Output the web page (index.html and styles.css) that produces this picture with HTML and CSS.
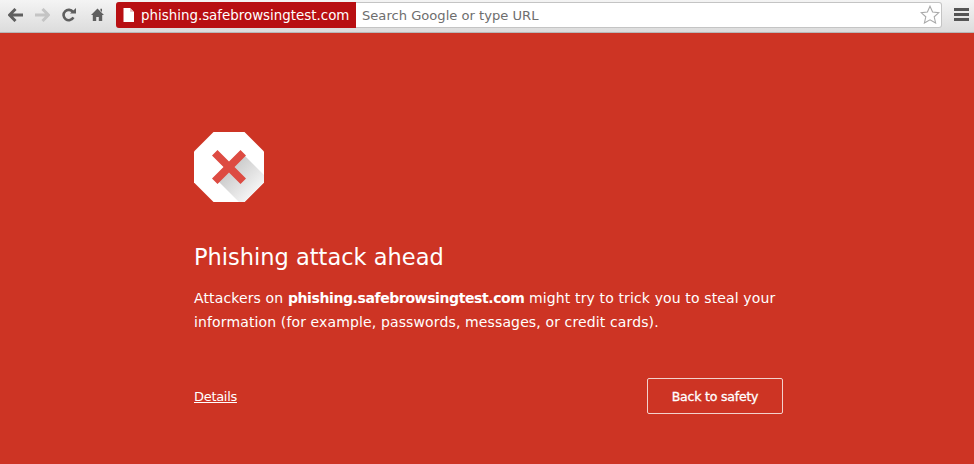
FILE: index.html
```html
<!DOCTYPE html>
<html lang="en">
<head>
    <meta charset="UTF-8">
    <title>Security error</title>
    <link rel="stylesheet" href="styles.css">
</head>
<body>
    <div class="toolbar">
        <div class="nav-buttons">
            <svg class="nav-icon" width="15" height="14" viewBox="0 0 15 14"><path d="M7.5 1 L1.5 7 L7.5 13 M2 7 H15" fill="none" stroke="#5f5f5f" stroke-width="3"/></svg>
            <svg class="nav-icon" width="15" height="14" viewBox="0 0 15 14"><path d="M7.5 1 L13.5 7 L7.5 13 M13 7 H0" fill="none" stroke="#c4c4c4" stroke-width="3"/></svg>
            <svg class="nav-icon" width="14" height="14" viewBox="0 0 14 14"><path d="M11.4 9.4 A5.2 5.2 0 1 1 11 4" fill="none" stroke="#5f5f5f" stroke-width="2.6"/><path d="M8 5.6 H14 V0 Z" fill="#5f5f5f"/></svg>
            <svg class="nav-icon home-icon" width="13" height="13" viewBox="0 0 13 13"><path d="M6.5 0.5 L13 7 H11.2 V13 H7.8 V9 H5.2 V13 H1.8 V7 H0 Z M9.4 0.8 H11 V4 L9.4 2.6 Z" fill="#5f5f5f"/></svg>
        </div>
        <div class="omnibox">
            <div class="chip">
                <svg class="page-icon" width="11" height="14" viewBox="0 0 11 14"><path d="M0.5 0 H7 L11 4 V14 H0.5 Z" fill="#fff"/><path d="M7.2 0 V3.8 H11 Z" fill="#e9b8b8"/></svg>
                <span class="chip-text">phishing.safebrowsingtest.com</span>
            </div>
            <div class="search-text">Search Google or type URL</div>
            <svg class="star" width="20" height="19" viewBox="0 0 20 19"><path d="M10 1.2 L12.6 7 L18.9 7.6 L14.2 11.8 L15.6 18 L10 14.8 L4.4 18 L5.8 11.8 L1.1 7.6 L7.4 7 Z" fill="#fff" stroke="#a9a9a9" stroke-width="1.1"/></svg>
        </div>
        <div class="menu-btn">
            <span></span><span></span><span></span>
        </div>
    </div>

    <div class="interstitial">
        <svg class="stop-icon" width="70" height="70" viewBox="0 0 70 70">
            <defs>
                <linearGradient id="shade" x1="0.2" y1="0.2" x2="0.85" y2="0.85">
                    <stop offset="0" stop-color="#c4c4c4"/>
                    <stop offset="1" stop-color="#f8f8f8"/>
                </linearGradient>
            </defs>
            <path d="M19.5 0 H50.5 L70 19.5 V50.5 L50.5 70 H19.5 L0 50.5 V19.5 Z" fill="#fff"/>
            <path d="M49 22 L70 43 V50.5 L50.5 70 H45 L23 48 Z" fill="url(#shade)"/>
            <path d="M23.5 18 L35 29.5 L46.5 18 L52 23.5 L40.5 35 L52 46.5 L46.5 52 L35 40.5 L23.5 52 L18 46.5 L29.5 35 L18 23.5 Z" fill="#dd4b42"/>
        </svg>
        <h1>Phishing attack ahead</h1>
        <p>Attackers on <strong>phishing.safebrowsingtest.com</strong> might try to trick you to steal your information (for example, passwords, messages, or credit cards).</p>
        <div class="actions">
            <a class="details" href="#">Details</a>
            <button class="back-btn">Back to safety</button>
        </div>
    </div>
</body>
</html>
```

FILE: styles.css
```css
* {
    box-sizing: border-box;
    margin: 0;
    padding: 0;
}

body {
    height: 464px;
    overflow: hidden;
    background: #cd3424;
    color: #fff;
    font-family: 'DejaVu Sans', sans-serif;
}

.toolbar {
    display: flex;
    align-items: center;
    height: 33px;
    padding: 0 5px 3px 8px;
    background: linear-gradient(#f4f4f4, #dcdcdc);
    border-bottom: 1px solid #b8b8b8;
}

.nav-buttons {
    display: flex;
    align-items: center;
    gap: 12px;
    width: 108px;
}

.home-icon {
    margin-left: 3px;
}

.omnibox {
    display: flex;
    align-items: center;
    width: 826px;
    height: 26px;
    background: #fff;
    border: 1px solid #c4c4c4;
    border-left: none;
    border-radius: 3px;
}

.chip {
    display: flex;
    align-items: center;
    gap: 7px;
    width: 240px;
    height: 26px;
    padding-left: 7px;
    background: #b80f12;
    color: #fff;
    font-size: 13.4px;
    border-radius: 3px 0 0 3px;
}

.chip-text {
    padding-top: 2px;
}

.search-text {
    flex: 1;
    padding: 2px 0 0 6px;
    color: #6e6e6e;
    font-size: 13.1px;
}

.star {
    margin-right: 1px;
}

.menu-btn {
    display: flex;
    flex-direction: column;
    gap: 2px;
    margin-left: 12px;
    width: 15px;
}

.menu-btn span {
    height: 3px;
    background: #555;
}

.interstitial {
    width: 589px;
    margin-left: 194px;
    padding-top: 99px;
}

.stop-icon {
    display: block;
}

h1 {
    margin-top: 40px;
    font-size: 22.5px;
    font-weight: normal;
    line-height: 30px;
}

p {
    margin-top: 14px;
    font-size: 14px;
    letter-spacing: 0.13px;
    line-height: 24px;
}

p strong {
    letter-spacing: -0.4px;
}

.actions {
    display: flex;
    justify-content: space-between;
    align-items: center;
    margin-top: 44px;
}

.details {
    color: #fff;
    font-size: 13px;
    letter-spacing: -0.3px;
}

.back-btn {
    width: 136px;
    height: 36px;
    background: transparent;
    border: 1px solid #f3d2cd;
    border-radius: 2px;
    color: #fff;
    font-family: inherit;
    font-size: 12.5px;
    letter-spacing: -0.2px;
    -webkit-text-stroke: 0.3px #fff;
}
```
